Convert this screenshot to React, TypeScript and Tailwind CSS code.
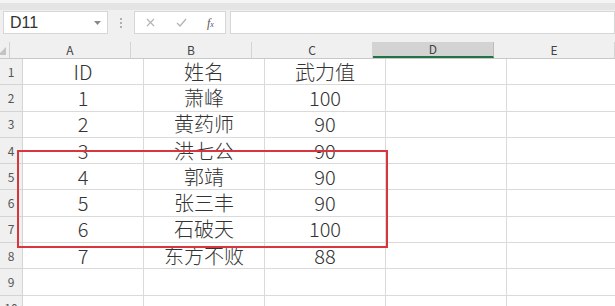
const rows: [string, string, string][] = [
  ["ID", "姓名", "武力值"],
  ["1", "萧峰", "100"],
  ["2", "黄药师", "90"],
  ["3", "洪七公", "90"],
  ["4", "郭靖", "90"],
  ["5", "张三丰", "90"],
  ["6", "石破天", "100"],
  ["7", "东方不败", "88"],
  ["", "", ""],
  ["", "", ""],
];

const cols = ["A", "B", "C", "D", "E"];

export default function App() {
  return (
    <div className="relative h-[306px] w-[615px] overflow-hidden bg-white font-['Noto_Sans_CJK_SC',sans-serif]">
      {/* toolbar edge */}
      <div className="h-[10px] border-t-[3px] border-[#f4f4f4] bg-[#e4e4e4]" />

      {/* formula bar */}
      <div className="flex h-[32px] items-start bg-[#f0f0f0] pl-[3px] pt-px">
        <div className="flex h-[23px] w-[105px] items-center justify-between border border-[#d6d6d6] bg-white pl-[6px] pr-[6px]">
          <span className="font-['Liberation_Sans',sans-serif] text-[16px] text-[#333]">D11</span>
          <svg width="7" height="4" viewBox="0 0 7 4">
            <path d="M0 0h7L3.5 4z" fill="#8a8a8a" />
          </svg>
        </div>
        <div className="flex h-[23px] w-[26px] flex-col items-center justify-center gap-[2px]">
          <span className="h-[2px] w-[2px] bg-[#b0b0b0]" />
          <span className="h-[2px] w-[2px] bg-[#b0b0b0]" />
          <span className="h-[2px] w-[2px] bg-[#b0b0b0]" />
        </div>
        <div className="flex h-[23px] w-[92px] items-center border border-[#d6d6d6] bg-white pl-[10px]">
          <svg width="9" height="9" viewBox="0 0 9 9" className="ml-[1px]">
            <path d="M1 1l7 7M8 1L1 8" stroke="#b4b4b4" strokeWidth="1.2" />
          </svg>
          <svg width="11" height="9" viewBox="0 0 11 9" className="ml-[21px]">
            <path d="M1 5l3 3 6-7" stroke="#b4b4b4" strokeWidth="1.3" fill="none" />
          </svg>
          <span className="ml-[20px] font-['Liberation_Serif',serif] text-[12px] italic text-[#555]">
            f<span className="text-[8px]">x</span>
          </span>
        </div>
        <div className="ml-[4px] h-[23px] flex-1 border border-[#d6d6d6] bg-white" />
      </div>

      {/* column headers */}
      <div className="flex h-[17px] border-b border-[#c8c8c8] bg-[#f0f0f0]">
        <div className="relative w-[23px] border-r border-[#d0d0d0]">
          <svg width="8" height="8" viewBox="0 0 8 8" className="absolute bottom-[3px] right-[3px]">
            <path d="M8 0v8H0z" fill="#c4c4c4" />
          </svg>
        </div>
        {cols.map((c) => (
          <div
            key={c}
            className={
              c === "D"
                ? "flex w-[121px] shrink-0 items-center justify-center border-r border-[#bdbdbd] border-b-2 border-b-[#217346] bg-[#d3d3d3] text-[12px] leading-none text-[#444]"
                : "flex w-[121px] shrink-0 items-center justify-center border-r border-[#d4d4d4] text-[12px] leading-none text-[#444]"
            }
          >
            {c}
          </div>
        ))}
      </div>

      {/* grid */}
      {rows.map((r, i) => (
        <div key={i} className="flex h-[26.3px] shrink-0">
          <div className="flex w-[23px] shrink-0 items-center justify-center border-r border-b border-[#d4d4d4] bg-[#f0f0f0] text-[12px] text-[#555]">
            {i + 1}
          </div>
          {r.map((v, j) => (
            <div
              key={j}
              className="flex w-[121px] shrink-0 items-center justify-center border-r border-b border-[#dadada] text-[20px] font-light leading-none text-[#333]"
            >
              {v}
            </div>
          ))}
          <div className="w-[121px] shrink-0 border-r border-b border-[#dadada]" />
          <div className="w-[121px] shrink-0 border-r border-b border-[#dadada]" />
        </div>
      ))}

      {/* red highlight */}
      <div className="absolute left-[17px] top-[150px] h-[98px] w-[371px] border-2 border-[#d9353d]" />
    </div>
  );
}
